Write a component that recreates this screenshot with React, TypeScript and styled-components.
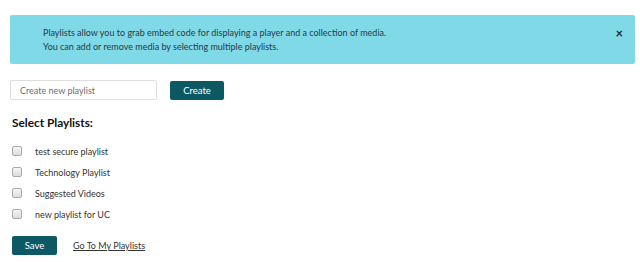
import React from "react";
import styled, { createGlobalStyle } from "styled-components";

const Global = createGlobalStyle`
  html, body { margin: 0; padding: 0; background: #fff; }
  body { font-family: Lato, "Open Sans", sans-serif; color: #333; }
`;

const Page = styled.div`
  padding: 15px 5px 0 10px;
  display: flex;
  flex-direction: column;
`;

const Alert = styled.div`
  background: #7fd9e7;
  border-radius: 2px;
  height: 49px;
  box-sizing: border-box;
  padding: 11px 12px 0 33px;
  display: flex;
  justify-content: space-between;
  align-items: flex-start;
  font-size: 9px;
  line-height: 14px;
  color: #2a3a44;
`;

const Close = styled.button`
  border: none;
  background: none;
  padding: 0;
  margin-top: 1px;
  font-family: Lato, sans-serif;
  font-size: 13px;
  line-height: 13px;
  font-weight: 700;
  color: #1c2a30;
  cursor: pointer;
`;

const CreateRow = styled.div`
  display: flex;
  align-items: center;
  gap: 13px;
  margin-top: 16px;
`;

const Input = styled.input`
  width: 147px;
  height: 20px;
  box-sizing: border-box;
  border: 1px solid #dedede;
  border-radius: 2px;
  padding: 0 9px;
  font-family: Lato, sans-serif;
  font-size: 9px;
  color: #555;
  outline: none;
  &::placeholder { color: #6f6f6f; }
`;

const Button = styled.button<{ $w: number }>`
  width: ${(p) => p.$w}px;
  height: 19px;
  border: none;
  border-radius: 2px;
  background: #0d5963;
  color: #fff;
  font-family: Lato, sans-serif;
  font-size: 9.5px;
  padding: 0;
  cursor: pointer;
`;

const Heading = styled.h3`
  margin: 15px 0 0 2px;
  font-size: 11.8px;
  font-weight: 700;
  color: #111;
  line-height: 16px;
`;

const List = styled.div`
  display: flex;
  flex-direction: column;
  gap: 9px;
  margin: 14px 0 0 2px;
`;

const Item = styled.label`
  display: flex;
  align-items: center;
  height: 12px;
  font-size: 9px;
  color: #333;
`;

const Check = styled.span`
  width: 8px;
  height: 8px;
  border: 1px solid #aaa;
  border-radius: 2px;
  background: linear-gradient(#f6f6f6, #dcdcdc);
  margin-right: 13px;
`;

const Footer = styled.div`
  display: flex;
  align-items: center;
  gap: 16px;
  margin: 16px 0 0 2px;
`;

const Link = styled.a`
  font-size: 9px;
  color: #333;
  text-decoration: underline;
`;

const items = ["test secure playlist", "Technology Playlist", "Suggested Videos", "new playlist for UC"];

export default function App() {
  return (
    <>
      <Global />
      <Page>
        <Alert>
          <div>
            Playlists allow you to grab embed code for displaying a player and a collection of media.
            <br />
            You can add or remove media by selecting multiple playlists.
          </div>
          <Close>×</Close>
        </Alert>
        <CreateRow>
          <Input placeholder="Create new playlist" />
          <Button $w={54}>Create</Button>
        </CreateRow>
        <Heading>Select Playlists:</Heading>
        <List>
          {items.map((t) => (
            <Item key={t}>
              <Check />
              {t}
            </Item>
          ))}
        </List>
        <Footer>
          <Button $w={45}>Save</Button>
          <Link href="#">Go To My Playlists</Link>
        </Footer>
      </Page>
    </>
  );
}
